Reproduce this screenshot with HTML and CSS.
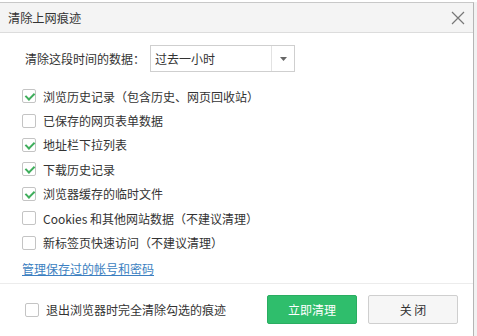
FILE: index.html
```html
<!DOCTYPE html>
<html lang="zh-CN">
<head>
<meta charset="utf-8">
<link rel="stylesheet" href="styles.css">
</head>
<body>
<div class="page">
  <div class="dialog">
    <div class="titlebar">
      <span class="title">清除上网痕迹</span>
      <svg class="close" width="14" height="14" viewBox="0 0 14 14"><path d="M1 1L13 13M13 1L1 13" stroke="#777" stroke-width="1.2" fill="none"/></svg>
    </div>
    <div class="content">
      <div class="range">
        <span class="label">清除这段时间的数据：</span>
        <div class="select">
          <span class="select-value">过去一小时</span>
          <span class="select-arrow"><svg width="7" height="4" viewBox="0 0 7 4"><path d="M0 0H7L3.5 4Z" fill="#666"/></svg></span>
        </div>
      </div>
      <ul class="options">
        <li class="option"><span class="cb checked"></span>浏览历史记录（包含历史、网页回收站）</li>
        <li class="option"><span class="cb"></span>已保存的网页表单数据</li>
        <li class="option"><span class="cb checked"></span>地址栏下拉列表</li>
        <li class="option"><span class="cb checked"></span>下载历史记录</li>
        <li class="option"><span class="cb checked"></span>浏览器缓存的临时文件</li>
        <li class="option"><span class="cb"></span>Cookies 和其他网站数据（不建议清理）</li>
        <li class="option"><span class="cb"></span>新标签页快速访问（不建议清理）</li>
      </ul>
      <a class="link">管理保存过的帐号和密码</a>
    </div>
    <div class="footer">
      <label class="exit"><span class="cb"></span>退出浏览器时完全清除勾选的痕迹</label>
      <div class="buttons">
        <button class="btn primary">立即清理</button>
        <button class="btn secondary">关 闭</button>
      </div>
    </div>
  </div>
  <div class="edge"></div>
</div>
</body>
</html>
```
FILE: styles.css
```css
* { box-sizing: border-box; }
html, body { margin: 0; padding: 0; background: #fff; }
body {
  font-family: "Microsoft YaHei", "Noto Sans CJK SC", "Noto Sans", sans-serif;
  font-size: 12px;
  color: #333;
  width: 477px;
  height: 336px;
  overflow: hidden;
}
.page { display: flex; padding-top: 2px; height: 336px; }
.dialog {
  width: 474px;
  height: 340px;
  border-top: 1px solid #c8c8c8;
  border-right: 1px solid #b5b5b5;
  background: #fff;
  display: flex;
  flex-direction: column;
}
.edge { flex: 1; background: #f2f2f2; }
.titlebar {
  height: 30px;
  background: #f4f4f4;
  border-bottom: 1px solid #dcdcdc;
  display: flex;
  align-items: center;
  justify-content: space-between;
  padding: 0 8px 0 8px;
}
.title { font-size: 12.2px; color: #333; }
.close { margin-right: 0; }
.content { padding: 12px 0 0 22px; height: 250px; }
.range { display: flex; align-items: center; margin-left: 3px; height: 27px; }
.label { width: 125px; }
.select {
  width: 145px;
  height: 27px;
  border: 1px solid #cfcfcf;
  display: flex;
  align-items: center;
  background: #fff;
}
.select-value { flex: 1; padding-left: 4px; }
.select-arrow {
  width: 23px;
  height: 25px;
  border-left: 1px solid #e2e2e2;
  display: flex;
  align-items: center;
  justify-content: center;
}
.options { list-style: none; margin: 12px 0 0 0; padding: 0; }
.option { height: 24.4px; display: flex; align-items: center; }
.cb {
  width: 14px;
  height: 14px;
  border: 1px solid #c4c4c4;
  border-radius: 2px;
  background: #fff;
  margin-right: 7px;
  position: relative;
  flex-shrink: 0;
}
.cb.checked::after {
  content: "";
  position: absolute;
  left: 4px;
  top: 1px;
  width: 4px;
  height: 7px;
  border-right: 2px solid #3fae5c;
  border-bottom: 2px solid #3fae5c;
  transform: rotate(45deg);
}
.link {
  display: block;
  margin-top: 2px;
  line-height: 24px;
  color: #3c7fc1;
  text-decoration: underline;
}
.footer {
  height: 54px;
  border-top: 1px solid #ececec;
  display: flex;
  align-items: center;
  justify-content: space-between;
  padding: 0 15px 2px 25px;
}
.exit { display: flex; align-items: center; }
.buttons { display: flex; gap: 11px; }
.btn {
  width: 90px;
  height: 29px;
  font-family: inherit;
  font-size: 12px;
  border-radius: 2px;
  padding: 0;
}
.primary { background: #2fbe6c; border: 1px solid #2aad61; color: #fff; }
.secondary { background: #f6f6f6; border: 1px solid #cfcfcf; color: #333; }
```
